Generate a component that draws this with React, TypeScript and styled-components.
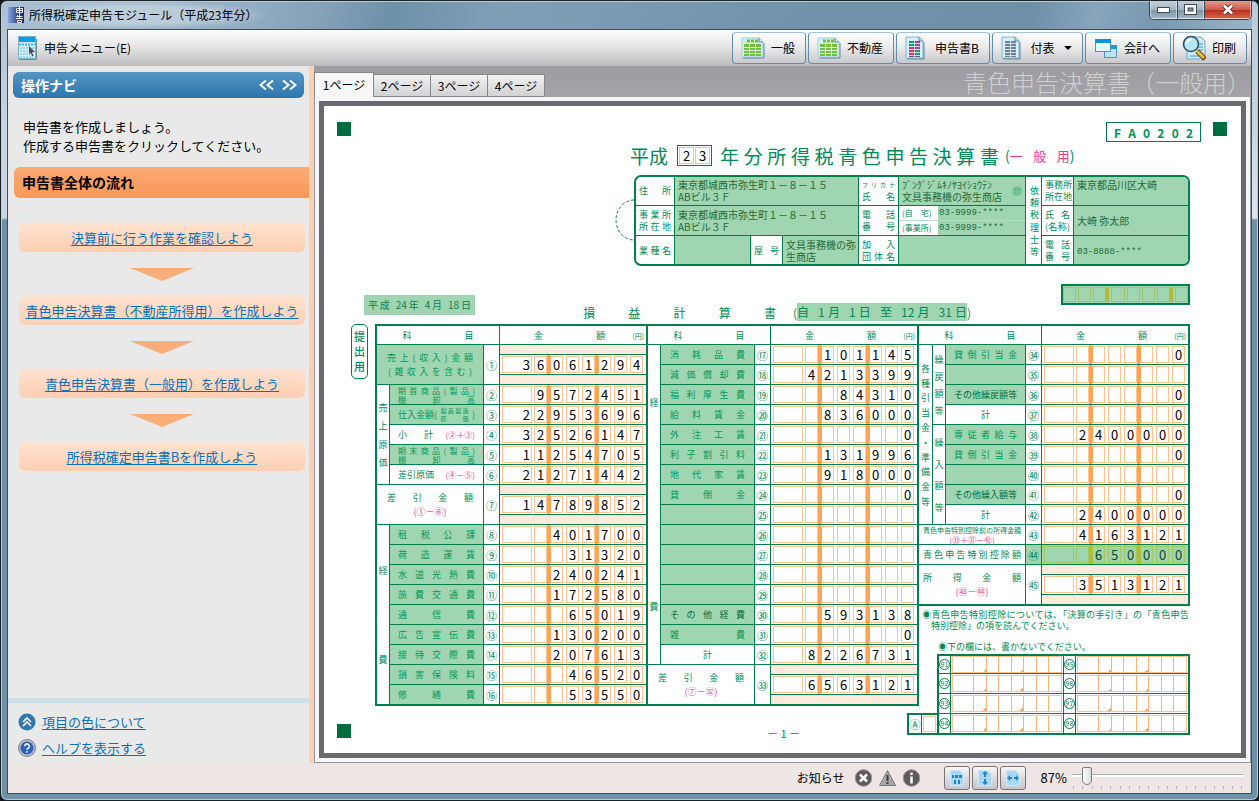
import React from "react";
import styled, { createGlobalStyle, css } from "styled-components";

const ink = "#008a57";
const line = "#007f4c";
const fill = "#9fd5b1";
const pink = "#ee3a93";
const jp = `"Noto Sans CJK JP", sans-serif`;

const GlobalStyle = createGlobalStyle`
  *, *::before, *::after { box-sizing: border-box; }
  body { margin: 0; background: #14181c; font: 12px/18px ${jp}; color: #000; }
  button { font: inherit; color: inherit; }
`;

/* ---------- window frame ---------- */

const Frame = styled.div`
  display: flex;
  flex-direction: column;
  min-height: 100vh;
  padding: 0 6px 6px;
  border: 1px solid #1b2228;
  border-radius: 7px;
  background:
    linear-gradient(180deg, #a9c0d2 0, #c9d6e2 130px, #c9d6e2 217px, transparent 219px) left / 6px 100% no-repeat,
    linear-gradient(180deg, #b8cbda 0, #c9d6e2 130px, #dbe5ee 217px, transparent 219px) right / 6px 100% no-repeat,
    linear-gradient(105deg, #a9c0d2 0, #93aec3 240px, #82a0b6 320px, #6c91a9 380px, #7f9fb5 480px, #7a9bb2 600px, #7194ab 740px, #6d90a8 1000px, #86a5bb 1060px, #7799b0 1120px, #9db6c9 100%) top / 100% 29px no-repeat,
    #6d92a8;
  box-shadow: inset 0 0 0 1px #b9ccd9;
`;

const TitleBar = styled.header`
  display: flex;
  justify-content: space-between;
  height: 28px;
`;

const AppTitle = styled.h1`
  display: flex;
  align-items: center;
  gap: 5px;
  margin: 0 0 0 1px;
  padding-right: 14px;
  font-size: 12px;
  font-weight: 400;
  background: radial-gradient(closest-side, rgba(255, 255, 255, 0.32) 60%, transparent);
`;

const Caption = styled.div`
  display: flex;
  height: 19px;
  border: 1px solid #38424c;
  border-top: 0;
  border-radius: 0 0 5px 5px;
  overflow: hidden;
`;

const CaptionButton = styled.button<{ $close?: boolean }>`
  display: grid;
  place-items: center;
  width: ${(p) => (p.$close ? 47 : 27)}px;
  padding: 0;
  border: 1px solid rgba(255, 255, 255, 0.5);
  border-top: 0;
  background: ${(p) =>
    p.$close
      ? "linear-gradient(#e39c90, #cf5a48 50%, #b92c1c 52%, #d8614a)"
      : "linear-gradient(#c3d0da, #a3b5c4 50%, #7c93a6 52%, #9fb3c3)"};
  & + & { border-left: 1px solid #38424c; }
`;

const Client = styled.div`
  display: flex;
  flex-direction: column;
  flex: 1;
  border: 1px solid #3f4d58;
  background: #e9e9e9;
`;

/* ---------- toolbar ---------- */

const Toolbar = styled.div`
  display: flex;
  align-items: center;
  justify-content: space-between;
  height: 36px;
  padding: 0 4px 0 10px;
  background: linear-gradient(#fdfdfd, #e6e6e6 45%, #bcbcbe);
`;

const MenuButton = styled.button`
  display: flex;
  align-items: center;
  gap: 7px;
  padding: 0;
  border: 0;
  background: none;
`;

const ToolGroup = styled.div`
  display: flex;
  gap: 2px;
`;

const ToolButton = styled.button<{ $w: number }>`
  display: flex;
  align-items: center;
  justify-content: space-between;
  width: ${(p) => p.$w}px;
  height: 32px;
  padding: 0 10px 0 8px;
  border: 1px solid #5f8db0;
  border-top-color: #a5c3d8;
  border-radius: 4px;
  background: linear-gradient(#fdfdfd, #ececed 45%, #c9c9cc);
  white-space: nowrap;
`;

/* ---------- navigation column ---------- */

const Work = styled.div`
  display: flex;
  flex: 1;
`;

const Side = styled.nav`
  display: flex;
  flex-direction: column;
  flex: 0 0 306px;
  border-right: 5px solid #fccfae;
  background: #e9e9e9;
`;

const NavHead = styled.div`
  display: flex;
  align-items: center;
  justify-content: space-between;
  height: 26px;
  margin: 6px 5px 0;
  padding: 0 7px 0 8px;
  border-radius: 6px;
  background: linear-gradient(#5394c3, #2c77ae);
  color: #fff;
  h2 { margin: 0; font-size: 14px; font-weight: 700; }
`;

const NavMove = styled.div`
  display: flex;
  gap: 8px;
  button { display: flex; padding: 0; border: 0; background: none; }
`;

const Lead = styled.p`
  margin: 19px 14px 12px 15px;
  font-size: 13px;
  line-height: 19px;
`;

const FlowHead = styled.h3`
  margin: 0 0 25px 6px;
  padding-left: 8px;
  border-radius: 6px 0 0 6px;
  background: linear-gradient(#fbaa76, #f99858);
  font-size: 14px;
  font-weight: 700;
  line-height: 31px;
`;

const Steps = styled.ol`
  display: flex;
  flex-direction: column;
  margin: 0 4px 0 11px;
  padding: 0;
  list-style: none;
`;

const Step = styled.li`
  display: flex;
  flex-direction: column;
  align-items: center;
  a {
    align-self: stretch;
    border-radius: 6px;
    background: linear-gradient(#ffe2d0, #fccfb2);
    text-align: center;
    line-height: 29px;
    white-space: nowrap;
  }
  svg { margin: 16px 0 15px; }
`;

const Link = styled.a`
  color: #0a72ba;
  font-size: 13px;
  text-underline-offset: 2px;
`;

const NavFoot = styled.div`
  display: flex;
  flex-direction: column;
  gap: 6px;
  margin-top: auto;
  padding: 9px 10px 5px;
  border-top: 5px solid #cbdfea;
`;

const FootLine = styled.div`
  display: flex;
  align-items: center;
  gap: 6px;
  height: 20px;
`;

/* ---------- document area ---------- */

const Main = styled.main`
  display: flex;
  flex-direction: column;
  flex: 1;
  min-width: 0;
`;

const TabStrip = styled.div`
  display: flex;
  align-items: flex-end;
  justify-content: space-between;
  height: 31px;
  background: linear-gradient(#9b9ba0, #a5a5a9);
`;

const Tabs = styled.div`
  display: flex;
  align-items: flex-end;
`;

const Tab = styled.button<{ $on?: boolean }>`
  width: ${(p) => (p.$on ? 60 : 57)}px;
  height: ${(p) => (p.$on ? 25 : 23)}px;
  padding: 0;
  border: 1px solid #85858c;
  border-bottom: ${(p) => (p.$on ? 0 : "1px solid #85858c")};
  border-left-width: ${(p) => (p.$on ? 1 : 0)}px;
  background: ${(p) => (p.$on ? "#f6f6f6" : "linear-gradient(#f2f2f2, #d2d2d4)")};
  line-height: 20px;
  font-size: 12px;
  white-space: nowrap;
`;

const DocTitle = styled.h2`
  margin: 0;
  color: #d0d0d2;
  font-size: 24px;
  font-weight: 300;
  line-height: 31px;
`;

const DocFrame = styled.div`
  display: flex;
  flex: 1;
  padding: 4px;
  border: 1px solid #8e96a2;
  border-top: 0;
  background: #f6f6f6;
`;

const Paper = styled.div`
  flex: 1;
  min-width: 0;
  border: 5px solid #6a6a6e;
  background: #fff;
`;

const Sheet = styled.article`
  width: 917px;
  margin: 0 auto;
  padding: 16px 0 0 13px;
  color: ${ink};
  font-size: 9px;
  line-height: 11px;
`;

const Mark = styled.i`
  display: block;
  width: 14px;
  height: 14px;
  background: #006d41;
`;

/* Spreads its characters over the full width, as printed forms do. */
const Spread = styled.span<{ $w?: number; $size?: number }>`
  display: block;
  width: ${(p) => (p.$w ? p.$w + "px" : "auto")};
  font-size: ${(p) => p.$size || 9}px;
  text-align: justify;
  text-align-last: justify;
  white-space: nowrap;
`;

const Formula = styled.span<{ $tight?: boolean }>`
  color: ${pink};
  font-size: ${(p) => (p.$tight ? 8 : 9)}px;
`;

const TopRow = styled.div`
  display: flex;
  height: 23px;
  padding-right: 14px;
`;

const Code = styled.div`
  display: flex;
  align-items: center;
  height: 20px;
  margin: 0 12px 0 auto;
  padding: 0 7px;
  border: 1px solid ${line};
  color: #00925c;
  font-weight: 700;
`;

const HeadBlock = styled.div`
  display: flex;
  flex-direction: column;
  width: 575px;
  margin: 0 51px 18px auto;
`;

const FormTitle = styled.div`
  display: flex;
  align-items: center;
  height: 21px;
  margin-bottom: 9px;
  padding-left: 15px;
  line-height: 21px;
`;

const Year = styled.span`
  display: flex;
  gap: 1px;
  margin: 0 8px 0 9px;
  padding: 1px;
  border: 1px solid ${line};
  b {
    width: 15px;
    border: 1px solid #fbc28c;
    color: #000;
    font-size: 13px;
    font-weight: 400;
    line-height: 15px;
    text-align: center;
  }
`;

const Kind = styled.span`
  display: flex;
  margin-left: 6px;
  font-size: 14px;
  em { color: ${pink}; font-style: normal; }
`;

const CardRow = styled.div`
  display: flex;
  > svg { flex: none; margin-top: 24px; }
`;

const Card = styled.div`
  flex: 1;
  height: 91px;
  border: 2px solid ${line};
  border-radius: 7px;
  overflow: hidden;
`;

const CardTable = styled.table`
  width: 100%;
  table-layout: fixed;
  border-collapse: separate;
  border-spacing: 0;
  th, td {
    height: 29px;
    padding: 0 3px;
    border-right: 1px solid ${line};
    border-bottom: 1px solid ${line};
    font-size: 9px;
    font-weight: 400;
    line-height: 12px;
    text-align: left;
  }
  tr > :last-child { border-right: 0; }
  tr:last-child > *, tr > .full { border-bottom: 0; }
  td { padding-right: 0; background: ${fill}; color: #1f6a3a; font-size: 10px; line-height: 12px; }
`;

const Phones = styled.td`
  && { padding: 0; }
  div { display: flex; align-items: center; height: 14px; font-size: 8px; line-height: 14px; }
  div + div { height: 15px; border-top: 1px solid #b9dfc4; }
  span { width: 39px; padding-left: 3px; background: #fff; color: ${ink}; white-space: nowrap; }
  b { padding-left: 1px; font: 9px/12px "Liberation Mono", monospace; }
`;

const Mono = styled.span`
  font: 9px/12px "Liberation Mono", monospace;
`;

const NameCell = styled.div`
  display: flex;
  align-items: center;
  justify-content: space-between;
  padding-right: 3px;
  white-space: nowrap;
  i { color: #00a060; font-style: normal; }
`;

const Vertical = styled.span<{ $h: number }>`
  display: block;
  height: ${(p) => p.$h}px;
  width: 11px;
  margin: 0 auto;
  writing-mode: vertical-rl;
  text-align-last: justify;
  text-align: justify;
  font-size: 9px;
  line-height: 11px;
`;

const SubRow = styled.div`
  display: flex;
  height: 40px;
  padding: 0 51px 0 27px;
`;

const Issued = styled.div`
  width: 111px;
  height: 20px;
  margin-top: 11px;
  padding: 0 4px;
  background: ${fill};
  color: #12804a;
  line-height: 20px;
`;

const Statement = styled.div`
  display: flex;
  align-items: center;
  height: 18px;
  margin: 19px auto 0 108px;
  font-size: 12px;
`;

const Period = styled.div`
  display: flex;
  align-items: center;
  margin-left: 17px;
  div { height: 18px; background: ${fill}; line-height: 18px; }
`;

const Office = styled.div`
  display: flex;
  width: 129px;
  height: 21px;
  padding: 1px 0;
  gap: 2px;
  border: 2px solid ${line};
  background: ${fill};
`;

const OfficeBox = styled.i<{ $bar?: boolean }>`
  flex: 1;
  border: 1px solid #a5c763;
  border-right: ${(p) => (p.$bar ? "4px solid #b0bb3a" : "1px solid #a5c763")};
`;

const FormBody = styled.div`
  display: flex;
  align-items: flex-start;
`;

const Gutter = styled.div`
  display: flex;
  flex-direction: column;
  justify-content: space-between;
  width: 38px;
  height: 414px;
`;

const Submit = styled.div`
  width: 17px;
  height: 55px;
  margin-left: 14px;
  padding: 4px 1px;
  border: 1px solid ${line};
  border-radius: 5px;
  font-size: 11px;
  font-weight: 500;
  line-height: 15px;
  text-align: center;
`;

const Section = styled.section<{ $first?: boolean }>`
  width: ${(p) => (p.$first ? 273 : 271)}px;
`;

const Ledger = styled.table<{ $first?: boolean }>`
  width: 100%;
  table-layout: fixed;
  border-collapse: separate;
  border-spacing: 0;
  border: 2px solid ${line};
  border-left-width: ${(p) => (p.$first ? 2 : 0)}px;
  border-bottom-width: 1px;
  tr { height: 20px; }
  thead tr { height: 19px; }
  th, td {
    padding: 0;
    border-right: 1px solid ${line};
    border-bottom: 1px solid ${line};
    font-weight: 400;
    text-align: center;
  }
  tr > .last { border-right: 0; }
`;

const HeadCell = styled.th`
  line-height: 11px;
`;

const HeadCenter = styled.div`
  display: flex;
  justify-content: center;
`;

const Money = styled.div`
  display: flex;
  align-items: flex-end;
  justify-content: space-between;
  padding: 0 2px 0 34px;
  small { font-size: 7px; line-height: 9px; }
`;

const Item = styled.th<{ $fill?: boolean; $pad?: number; $dark?: boolean }>`
  && { padding: 0 ${(p) => p.$pad || 9}px; }
  ${(p) => p.$fill && css`background: ${fill};`}
  color: ${(p) => (p.$dark ? "#00703f" : p.$fill ? "#00995a" : ink)};
  line-height: 9px;
`;

const No = styled.th<{ $fill?: boolean }>`
  font-size: 11px;
  line-height: 12px;
  ${(p) => p.$fill && css`background: ${fill};`}
`;

const Digits = styled.div<{ $fill?: boolean }>`
  display: flex;
  height: 19px;
  padding-left: 2px;
  background: ${(p) => (p.$fill ? fill : "#fff")};
  color: ${(p) => (p.$fill ? "#064a26" : "#000")};
`;

const Digit = styled.span<{ $wide?: boolean; $afterBar?: boolean; $fill?: boolean }>`
  width: ${(p) => (p.$wide ? 30 : 13)}px;
  margin: 1px 0;
  padding-right: ${(p) => (p.$wide ? 1 : 0)}px;
  border: 1px solid ${(p) => (p.$fill ? "#a5c763" : "#fbc390")};
  border-left-color: ${(p) => (p.$afterBar ? (p.$fill ? "#b0bb3a" : "#fba555") : p.$fill ? "#a5c763" : "#fbc390")};
  font-size: 13px;
  font-weight: 400;
  line-height: 15px;
  text-align: ${(p) => (p.$wide ? "right" : "center")};
`;

const Gap = styled.i<{ $bar?: boolean; $fill?: boolean; $first?: boolean }>`
  width: ${(p) => (p.$first ? 2 : 3)}px;
  background: ${(p) => (p.$bar ? (p.$fill ? "#b0bb3a" : "#fba555") : "none")};
`;

const Band = styled.div<{ $low?: boolean }>`
  height: 10px;
  background: #fdeadc;
  ${(p) => (p.$low ? css`border-top: 1px solid ${line};` : css`border-bottom: 1px solid ${line};`)}
`;

const Maker = styled.span`
  display: flex;
  align-items: center;
  justify-content: space-between;
  white-space: nowrap;
  small { display: block; width: 28px; font-size: 6px; line-height: 8px; }
`;

const Inline = styled.span`
  display: flex;
  align-items: center;
  justify-content: space-between;
  white-space: nowrap;
`;

const Result = styled.div`
  display: flex;
  flex-direction: column;
  align-items: center;
  gap: 5px;
`;

const PageNo = styled.p`
  margin: 19px 0 0;
  font-size: 11px;
  line-height: 16px;
  text-align: center;
`;

const Note = styled.div<{ $second?: boolean }>`
  margin: ${(p) => (p.$second ? "10px 0 2px 19px" : "3px 0 0 3px")};
  white-space: nowrap;
  p { margin: 0; padding-left: 9px; }
`;

const Reserved = styled.div`
  display: flex;
  align-items: flex-end;
  justify-content: flex-end;
`;

const Annex = styled.div`
  display: flex;
  flex: none;
  width: 30px;
  height: 22px;
  border: 2px solid ${line};
  border-right: 0;
  line-height: 18px;
  font-size: 11px;
  span { width: 13px; border-right: 1px solid ${line}; text-align: center; }
  i { flex: 1; margin: 1px; border: 1px solid #fbc390; }
`;

const ReservedTable = styled.table`
  flex: none;
  width: 253px;
  table-layout: fixed;
  border-collapse: separate;
  border-spacing: 0;
  border: 2px solid ${line};
  border-bottom-width: 1px;
  th, td { height: 20px; padding: 0; border-right: 1px solid ${line}; border-bottom: 1px solid ${line}; }
  tr:first-child > * { height: 18px; }
  tr > :last-child { border-right: 0; }
`;

const Ring = styled.span`
  display: block;
  width: 11px;
  height: 11px;
  border: 1px solid ${line};
  border-radius: 6px;
  font-size: 7px;
  font-weight: 400;
  line-height: 9px;
  text-align: center;
`;

const Slots = styled.div`
  display: flex;
  height: 17px;
  margin: 0 1px;
  border: 1px solid #fbc390;
`;

const Slot = styled.i<{ $wide?: boolean; $mark?: boolean }>`
  flex: ${(p) => (p.$wide ? "0 0 21px" : "1")};
  border-right: 1px solid #fbb273;
  ${(p) => p.$mark && css`background: linear-gradient(135deg, transparent 50%, #fba555 50%) right bottom / 3px 3px no-repeat;`}
  &:last-child { border-right: 0; }
`;

/* ---------- status bar ---------- */

const Status = styled.footer`
  display: flex;
  align-items: center;
  justify-content: flex-end;
  height: 30px;
  padding-right: 8px;
  background: #ede6e5;
`;

const Notices = styled.div`
  display: flex;
  align-items: center;
  gap: 5px;
  margin-right: 23px;
  span { margin-right: 4px; }
`;

const FitGroup = styled.div`
  display: flex;
  gap: 2px;
  margin-right: 15px;
`;

const FitButton = styled.button`
  display: grid;
  place-items: center;
  width: 26px;
  height: 24px;
  padding: 0;
  border: 1px solid #76767a;
  border-radius: 3px;
  background: linear-gradient(#f6f6f6, #dcdcde 50%, #c6c6ca);
`;

const Zoom = styled.label`
  display: flex;
  align-items: center;
  gap: 5px;
  font-size: 13px;
`;

const Scale = styled.span`
  display: flex;
  flex-direction: column;
  gap: 1px;
  width: 171px;
  svg { display: block; width: 100%; }
`;

const Range = styled.input`
  appearance: none;
  width: 100%;
  height: 18px;
  margin: 0;
  background: linear-gradient(#b0adb0, #b0adb0) 0 7px / 100% 1px no-repeat, linear-gradient(#fff, #fff) 0 8px / 100% 2px no-repeat;
  &::-webkit-slider-thumb {
    appearance: none;
    width: 10px;
    height: 18px;
    border: 1px solid #77777c;
    border-radius: 2px 2px 5px 5px;
    background: linear-gradient(90deg, #fff, #dcdcde);
  }
`;

/* ---------- drawings ---------- */

const AppIcon = () => (
  <svg width="16" height="16" viewBox="0 0 16 16">
    <defs><linearGradient id="ai"><stop offset="0" stopColor="#8ea6dd" /><stop offset=".6" stopColor="#2c4a9c" /><stop offset="1" stopColor="#122a72" /></linearGradient></defs>
    <rect width="16" height="16" fill="url(#ai)" />
    <path d="M8.500 1.500h6v4h-6zM8.500 3.500h6M11.500 0v8M9.500 8v2M8.500 9.500h6M11.500 8v4M8 11.500h7M9.500 13.500h4v2h-4z" fill="none" stroke="#fff" strokeWidth=".9" />
  </svg>
);

const MenuIcon = () => (
  <svg width="19" height="24" viewBox="0 0 19 24">
    <rect x=".5" y=".5" width="17" height="22" fill="#d6effb" stroke="#7cb4d0" />
    <rect x="1" y="1" width="16" height="5" fill="#0a9de0" />
    <path d="M1 8.500h16" stroke="#3db4ea" strokeWidth="2" strokeDasharray="2 1" />
    <path d="M2 12h15M2 15h10M2 18h10M2 21h13" stroke="#5cbbe6" strokeDasharray="2 1" />
    <path d="M11 10l6 6-3 .2 1.600 3.500-1.500.6-1.500-3.500-1.600 1.700z" fill="#4b4b50" />
    <path d="M1 23.500h17.500V3" fill="none" stroke="#6c8ca0" />
  </svg>
);

const SheetIcon = () => (
  <svg width="24" height="22" viewBox="0 0 24 22">
    <path d="M1 1h17l4 4v15H1z" fill="#d3ecf8" stroke="#a5cfe4" />
    <path d="M18 1v4h4M23 6v15H2" fill="none" stroke="#64879c" />
    <path d="M6 2.500h11v3H6zM3 7h17v12H3z" fill="#6cc23e" />
    <path d="M3 10.500h17M3 13.500h17M3 16.500h17M8.500 7v12M14.500 7v12M9.500 2v4M13.500 2v4" stroke="#e4f6da" />
  </svg>
);

const PageIcon = ({ color }: { color?: boolean }) => (
  <svg width="20" height="24" viewBox="0 0 20 24">
    <path d="M1 1h13l4 4v17H1z" fill="#d9effa" stroke="#7fb4d0" />
    <path d="M14 1v4h4M19 6v17H2" fill="none" stroke="#5f8299" />
    <path d="M4 5h11v16H4z" fill={color ? "#5a5a90" : "#6e8390"} />
    {color && <><path d="M6.500 6v6" stroke="#1fae6a" strokeWidth="3" /><path d="M6.500 12v8" stroke="#d8366c" strokeWidth="3" /><path d="M12.500 6v7" stroke="#a948b0" strokeWidth="3" /><path d="M12.500 13v7" stroke="#2e9a6a" strokeWidth="3" /></>}
    <path d="M4 7.500h11M4 10.500h11M4 13.500h11M4 16.500h11M4 19.500h11M9.500 5v16" stroke="#e6f4fb" strokeWidth=".8" />
  </svg>
);

const WindowsIcon = () => (
  <svg width="24" height="21" viewBox="0 0 24 21">
    <rect x="10.500" y="7.500" width="12" height="12" fill="#bfe2f4" stroke="#4f93b8" />
    <rect x="10" y="7" width="13" height="4" fill="#1d9bdc" />
    <rect x="1.500" y="1.500" width="15" height="12" fill="#e6f5fc" stroke="#4f93b8" />
    <rect x="1" y="1" width="16" height="4" fill="#0f94da" />
  </svg>
);

const PrintIcon = () => (
  <svg width="24" height="26" viewBox="0 0 24 26">
    <path d="M8 2h11l4 4v18H5V2z" fill="#cfe9f6" stroke="#6fa4c2" />
    <path d="M15 9h6M15 12h6M15 15h6M8 21h9" stroke="#3b9ac8" />
    <path d="M15 16l8 8" stroke="#5b4a1c" strokeWidth="5" />
    <path d="M15 16l7 7" stroke="#f5b52a" strokeWidth="3" />
    <circle cx="9" cy="9" r="7.500" fill="#b7e6f7" stroke="#2b5268" strokeWidth="1.600" />
    <path d="M4.500 8.500a5 5 0 0 1 5-4" fill="none" stroke="#fff" strokeWidth="1.800" />
  </svg>
);

const Chevrons = ({ flip }: { flip?: boolean }) => (
  <svg width="15" height="12" viewBox="0 0 15 12">
    <path d={flip ? "M1 1.500l5.500 4.500-5.500 4.500M8 1.500l5.500 4.500-5.500 4.500" : "M7 1.500l-5.500 4.500 5.500 4.500M14 1.500l-5.500 4.500 5.500 4.500"} fill="none" stroke="#fff" strokeWidth="2" />
  </svg>
);

const RoundUp = () => (
  <svg width="18" height="18" viewBox="0 0 18 18">
    <circle cx="9" cy="9" r="8.500" fill="#2f78ad" />
    <path d="M5 9l4-4 4 4M5 13l4-4 4 4" fill="none" stroke="#fff" strokeWidth="1.600" />
  </svg>
);

const Help = () => (
  <svg width="18" height="18" viewBox="0 0 18 18">
    <circle cx="9" cy="9" r="8.500" fill="#b9bcc2" stroke="#808288" />
    <circle cx="9" cy="9" r="6.500" fill="#2a62bd" />
    <path d="M6.700 7.300a2.300 2.300 0 1 1 3.300 2c-.8.4-1 .7-1 1.500" fill="none" stroke="#fff" strokeWidth="1.500" />
    <circle cx="9" cy="12.800" r=".9" fill="#fff" />
  </svg>
);

const NoticeIcon = ({ kind }: { kind: "x" | "warn" | "info" }) => (
  <svg width="19" height="18" viewBox="0 0 19 18">
    {kind === "warn" ? (
      <><path d="M9.500 1.500l8 15h-16z" fill="#a9a7a8" stroke="#77757a" /><path d="M9.500 6v6M9.500 13v2" stroke="#3c3a3e" strokeWidth="2" /></>
    ) : (
      <><circle cx="9.500" cy="9" r="8.300" fill="#5b5a5d" stroke="#9b999b" />
        {kind === "x" ? <path d="M6 5.500l7 7M13 5.500l-7 7" stroke="#fff" strokeWidth="2.500" /> : <path d="M9.500 3.500v2.500M9.500 7.500v7" stroke="#fff" strokeWidth="2.500" />}</>
    )}
  </svg>
);

const FitIcon = ({ d }: { d: string }) => (
  <svg width="14" height="16" viewBox="0 0 14 16">
    <path d="M.5.5h9l4 4v11H.5z" fill="#a9d6f2" stroke="#cfe8f7" />
    <path d={d} fill="#2185cc" />
  </svg>
);

/* ---------- form pieces ---------- */

type RowKind = "fill" | "plain" | "dark";
interface Row { label?: React.ReactNode; kind?: RowKind; no: string; value: string }

const Boxes = ({ value, tint }: { value: string; tint?: boolean }) => {
  const cells = value.padStart(8, " ").split("");
  return (
    <Digits $fill={tint}>
      {cells.map((c, i) => (
        <React.Fragment key={i}>
          <Digit $wide={i === 0} $afterBar={i === 2 || i === 5} $fill={tint}>{c}</Digit>
          {i < 7 && <Gap $first={i === 0} $bar={i === 1 || i === 4} $fill={tint} />}
        </React.Fragment>
      ))}
    </Digits>
  );
};

const Tall = ({ value }: { value: string }) => (
  <td className="last" rowSpan={2}>
    <Band />
    <Boxes value={value} />
    <Band $low />
  </td>
);

const Cells = ({ row, pad }: { row: Row; pad: number }) => (
  <>
    <Item $fill={row.kind !== "plain"} $dark={row.kind === "dark"} $pad={pad}>
      {typeof row.label === "string" && row.label.length > 1 ? <Spread>{row.label}</Spread> : row.label}
    </Item>
    <No>{row.no}</No>
    <td className="last"><Boxes value={row.value} /></td>
  </>
);

const Stock = ({ name }: { name: string }) => (
  <><Spread $size={8}>{name}</Spread><Spread $size={8}>棚 卸 高</Spread></>
);

const cost: Row[] = [
  { label: <Stock name="期首商品(製品)" />, no: "②", value: "9572451" },
  { label: <Maker>仕入金額(<small><Spread $size={6}>製品製造</Spread><Spread $size={6}>原 価</Spread></small>)</Maker>, no: "③", value: "22953696" },
  { label: <Inline><Spread $w={35}>小 計</Spread><Formula $tight>(②＋③)</Formula></Inline>, kind: "plain", no: "④", value: "32526147" },
  { label: <Stock name="期末商品(製品)" />, no: "⑤", value: "11254705" },
  { label: <Inline>差引原価<Formula $tight>(④－⑤)</Formula></Inline>, kind: "plain", no: "⑥", value: "21271442" },
];

const expenseA: Row[] = [
  { label: "租税公課", no: "⑧", value: "401700" },
  { label: "荷造運賃", no: "⑨", value: "31320" },
  { label: "水道光熱費", no: "⑩", value: "240241" },
  { label: "旅費交通費", no: "⑪", value: "172580" },
  { label: "通信費", no: "⑫", value: "65019" },
  { label: "広告宣伝費", no: "⑬", value: "130200" },
  { label: "接待交際費", no: "⑭", value: "207613" },
  { label: "損害保険料", no: "⑮", value: "46520" },
  { label: "修繕費", no: "⑯", value: "53550" },
];

const expenseB: Row[] = [
  { label: "消耗品費", no: "⑰", value: "101145" },
  { label: "減価償却費", no: "⑱", value: "4213399" },
  { label: "福利厚生費", no: "⑲", value: "84310" },
  { label: "給料賃金", no: "⑳", value: "836000" },
  { label: "外注工賃", no: "㉑", value: "0" },
  { label: "利子割引料", no: "㉒", value: "131996" },
  { label: "地代家賃", no: "㉓", value: "918000" },
  { label: "貸倒金", no: "㉔", value: "0" },
  { no: "㉕", value: "" },
  { no: "㉖", value: "" },
  { no: "㉗", value: "" },
  { no: "㉘", value: "" },
  { no: "㉙", value: "" },
  { label: "その他経費", kind: "dark", no: "㉚", value: "593138" },
  { label: "雑費", no: "㉛", value: "0" },
  { label: "計", kind: "plain", no: "㉜", value: "8226731" },
];

const reserves: Row[] = [
  { label: "貸倒引当金", no: "㉞", value: "0" },
  { no: "㉟", value: "" },
  { label: "その他繰戻額等", kind: "dark", no: "㊱", value: "0" },
  { label: "計", kind: "plain", no: "㊲", value: "0" },
  { label: "専従者給与", no: "㊳", value: "2400000" },
  { label: "貸倒引当金", no: "㊴", value: "0" },
  { no: "㊵", value: "" },
  { label: "その他繰入額等", kind: "dark", no: "㊶", value: "0" },
  { label: "計", kind: "plain", no: "㊷", value: "2400000" },
];

const Cols = ({ w }: { w: number[] }) => (
  <colgroup>{w.map((x, i) => <col key={i} width={x} />)}</colgroup>
);

const LedgerHead = ({ span }: { span: number }) => (
  <thead>
    <tr>
      <HeadCell colSpan={span}><HeadCenter><Spread $w={71}>科 目</Spread></HeadCenter></HeadCell>
      <HeadCell className="last"><Money><Spread $w={71}>金 額</Spread><small>(円)</small></Money></HeadCell>
    </tr>
  </thead>
);

const FirstLedger = () => (
  <Ledger $first>
    <Cols w={[13, 94, 16, 146]} />
    <LedgerHead span={3} />
    <tbody>
      <tr>
        <Item colSpan={2} rowSpan={2} $fill $pad={11}>
          <Result><Spread $w={86}>売上(収入)金額</Spread><Spread $w={84}>(雑収入を含む)</Spread></Result>
        </Item>
        <No rowSpan={2}>①</No>
        <Tall value="36061294" />
      </tr>
      <tr />
      {cost.map((r, i) => (
        <tr key={r.no}>
          {i === 0 && <th rowSpan={5}><Vertical $h={64}>売上原価</Vertical></th>}
          <Cells row={r} pad={8} />
        </tr>
      ))}
      <tr>
        <Item colSpan={2} rowSpan={2} $pad={10}>
          <Result><Spread $w={86}>差引金額</Spread><Formula>(①－⑥)</Formula></Result>
        </Item>
        <No rowSpan={2}>⑦</No>
        <Tall value="14789852" />
      </tr>
      <tr />
      {expenseA.map((r, i) => (
        <tr key={r.no}>
          {i === 0 && <th rowSpan={9}><Vertical $h={98}>経費</Vertical></th>}
          <Cells row={r} pad={8} />
        </tr>
      ))}
    </tbody>
  </Ledger>
);

const SecondLedger = () => (
  <Ledger>
    <Cols w={[13, 94, 16, 146]} />
    <LedgerHead span={3} />
    <tbody>
      {expenseB.map((r, i) => (
        <tr key={r.no}>
          {i === 0 && <th rowSpan={16}><Vertical $h={213}>経費</Vertical></th>}
          <Cells row={r} pad={9} />
        </tr>
      ))}
      <tr>
        <Item colSpan={2} rowSpan={2} $pad={10}>
          <Result><Spread $w={86}>差引金額</Spread><Formula>(⑦－㉜)</Formula></Result>
        </Item>
        <No rowSpan={2}>㉝</No>
        <Tall value="6563121" />
      </tr>
      <tr />
    </tbody>
  </Ledger>
);

const ThirdLedger = () => (
  <Ledger>
    <Cols w={[14, 13, 80, 16, 146]} />
    <LedgerHead span={4} />
    <tbody>
      {reserves.map((r, i) => (
        <tr key={r.no}>
          {i === 0 && <th rowSpan={9}><Vertical $h={142}>各種引当金・準備金等</Vertical></th>}
          {i === 0 && <th rowSpan={4}><Vertical $h={60}>繰戻額等</Vertical></th>}
          {i === 4 && <th rowSpan={5}><Vertical $h={74}>繰入額等</Vertical></th>}
          <Cells row={r} pad={8} />
        </tr>
      ))}
      <tr>
        <Item colSpan={3} $pad={4}>
          <Spread $size={7}>青色申告特別控除前の所得金額</Spread>
          <Formula $tight>(㉝＋㊲－㊷)</Formula>
        </Item>
        <No>㊸</No>
        <td className="last"><Boxes value="4163121" /></td>
      </tr>
      <tr>
        <Item colSpan={3} $pad={4}><Spread>青色申告特別控除額</Spread></Item>
        <No $fill>㊹</No>
        <td className="last"><Boxes value="650000" tint /></td>
      </tr>
      <tr>
        <Item colSpan={3} rowSpan={2} $pad={4}>
          <Result><Spread $w={98}>所得金額</Spread><Formula>(㊸－㊹)</Formula></Result>
        </Item>
        <No rowSpan={2}>㊺</No>
        <Tall value="3513121" />
      </tr>
      <tr />
    </tbody>
  </Ledger>
);

const SlotRow = () => (
  <Slots>
    {[0, 1, 2, 3, 4, 5, 6, 7].map((i) => <Slot key={i} $wide={i === 0} $mark={i === 1 || i === 4} />)}
  </Slots>
);

const HeaderCard = () => (
  <Card>
    <CardTable>
      <Cols w={[39, 76, 32, 76, 40, 39, 88, 16, 32, 114]} />
      <tbody>
        <tr>
          <th><Spread>住 所</Spread></th>
          <td colSpan={3}>東京都城西市弥生町１－８－１５<br />ABビル３Ｆ</td>
          <th><Spread $size={6}>フリガナ</Spread><Spread>氏 名</Spread></th>
          <td colSpan={2}>
            <NameCell><span>ﾌﾞﾝｸﾞｼﾞﾑｷﾉﾔﾖｲｼｮｳﾃﾝ<br />文具事務機の弥生商店</span><i>㊞</i></NameCell>
          </td>
          <th rowSpan={3} className="full"><Vertical $h={70}>依頼税理士等</Vertical></th>
          <th><Spread>事務所</Spread><Spread>所在地</Spread></th>
          <td>東京都品川区大崎<br />&nbsp;</td>
        </tr>
        <tr>
          <th><Spread>事業所</Spread><Spread>所在地</Spread></th>
          <td colSpan={3}>東京都城西市弥生町１－８－１５<br />ABビル３Ｆ</td>
          <th><Spread>電 話</Spread><Spread>番 号</Spread></th>
          <Phones colSpan={2}>
            <div><span>(自　宅)</span><b>03-9999-****</b></div>
            <div><span>(事業所)</span><b>03-9999-****</b></div>
          </Phones>
          <th><Spread>氏 名</Spread><Spread>(名称)</Spread></th>
          <td>大崎 弥太郎</td>
        </tr>
        <tr>
          <th><Spread>業種名</Spread></th>
          <td />
          <th><Spread>屋 号</Spread></th>
          <td>文具事務機の弥生商店</td>
          <th><Spread>加 入</Spread><Spread>団体名</Spread></th>
          <td colSpan={2} />
          <th><Spread>電 話</Spread><Spread>番 号</Spread></th>
          <td><Mono>03-8888-****</Mono></td>
        </tr>
      </tbody>
    </CardTable>
  </Card>
);

const steps = [
  "決算前に行う作業を確認しよう",
  "青色申告決算書（不動産所得用）を作成しよう",
  "青色申告決算書（一般用）を作成しよう",
  "所得税確定申告書Bを作成しよう",
];

export default function App() {
  return (
    <>
      <GlobalStyle />
      <Frame>
        <TitleBar>
          <AppTitle><AppIcon />所得税確定申告モジュール（平成23年分）</AppTitle>
          <Caption>
            <CaptionButton aria-label="最小化"><svg width="13" height="6"><rect x=".5" y=".5" width="12" height="5" fill="#fff" stroke="#444c55" /></svg></CaptionButton>
            <CaptionButton aria-label="最大化"><svg width="13" height="11"><rect x=".5" y=".5" width="12" height="10" fill="#fff" stroke="#444c55" /><rect x="4" y="4" width="5" height="3" fill="#8299ab" stroke="#444c55" /></svg></CaptionButton>
            <CaptionButton $close aria-label="閉じる"><svg width="14" height="11" viewBox="0 0 14 11"><path d="M3 1.500l8 8M11 1.500l-8 8" stroke="#4c3238" strokeWidth="4.500" /><path d="M3 1.500l8 8M11 1.500l-8 8" stroke="#fff" strokeWidth="2.500" /></svg></CaptionButton>
          </Caption>
        </TitleBar>
        <Client>
          <Toolbar>
            <MenuButton><MenuIcon />申告メニュー(E)</MenuButton>
            <ToolGroup>
              <ToolButton $w={74}><SheetIcon />一般</ToolButton>
              <ToolButton $w={86}><SheetIcon />不動産</ToolButton>
              <ToolButton $w={94}><PageIcon color />申告書B</ToolButton>
              <ToolButton $w={91}><PageIcon />付表<svg width="8" height="4"><path d="M0 0h8l-4 4z" /></svg></ToolButton>
              <ToolButton $w={86}><WindowsIcon />会計へ</ToolButton>
              <ToolButton $w={74}><PrintIcon />印刷</ToolButton>
            </ToolGroup>
          </Toolbar>
          <Work>
            <Side>
              <NavHead>
                <h2>操作ナビ</h2>
                <NavMove>
                  <button aria-label="前へ"><Chevrons /></button>
                  <button aria-label="次へ"><Chevrons flip /></button>
                </NavMove>
              </NavHead>
              <Lead>申告書を作成しましょう。<br />作成する申告書をクリックしてください。</Lead>
              <FlowHead>申告書全体の流れ</FlowHead>
              <Steps>
                {steps.map((s, i) => (
                  <Step key={s}>
                    <Link href="#">{s}</Link>
                    {i < 3 && <svg width="64" height="13"><path d="M0 0h64l-32 13z" fill="#f9ad79" /></svg>}
                  </Step>
                ))}
              </Steps>
              <NavFoot>
                <FootLine><RoundUp /><Link href="#">項目の色について</Link></FootLine>
                <FootLine><Help /><Link href="#">ヘルプを表示する</Link></FootLine>
              </NavFoot>
            </Side>
            <Main>
              <TabStrip>
                <Tabs>
                  <Tab $on>1ページ</Tab>
                  <Tab>2ページ</Tab>
                  <Tab>3ページ</Tab>
                  <Tab>4ページ</Tab>
                </Tabs>
                <DocTitle>青色申告決算書（一般用）</DocTitle>
              </TabStrip>
              <DocFrame>
                <Paper>
                  <Sheet>
                    <TopRow>
                      <Mark />
                      <Code><Spread $w={79} $size={12}>F A 0 2 0 2</Spread></Code>
                      <Mark />
                    </TopRow>
                    <HeadBlock>
                      <FormTitle>
                        <Spread $w={38} $size={19}>平成</Spread>
                        <Year><b>2</b><b>3</b></Year>
                        <Spread $w={279} $size={19}>年分所得税青色申告決算書</Spread>
                        <Kind>(<em><Spread $w={60} $size={13}>一般用</Spread></em>)</Kind>
                      </FormTitle>
                      <CardRow>
                        <svg width="19" height="42"><path d="M19 1A18 20 0 0 0 19 41" fill="none" stroke={line} strokeDasharray="3 2" /></svg>
                        <HeaderCard />
                      </CardRow>
                    </HeadBlock>
                    <SubRow>
                      <Issued><Spread $size={10}>平成 24年 4月 18日</Spread></Issued>
                      <Statement>
                        <Spread $w={193} $size={12}>損益計算書</Spread>
                        <Period>(<div><Spread $w={170} $size={12}>自 1月 1日 至 12月 31日</Spread></div>)</Period>
                      </Statement>
                      <Office>
                        {[0, 1, 2, 3, 4, 5, 6, 7].map((i) => <OfficeBox key={i} $bar={i === 2 || i === 6} />)}
                      </Office>
                    </SubRow>
                    <FormBody>
                      <Gutter><Submit>提出用</Submit><Mark /></Gutter>
                      <Section $first><FirstLedger /></Section>
                      <Section>
                        <SecondLedger />
                        <PageNo>－ 1 －</PageNo>
                      </Section>
                      <Section>
                        <ThirdLedger />
                        <Note>
                          <Spread $w={267}>◉青色申告特別控除については、「決算の手引き」の「青色申告</Spread>
                          <p>特別控除」の項を読んでください。</p>
                        </Note>
                        <Note $second>◉下の欄には、書かないでください。</Note>
                        <Reserved>
                          <Annex><span>Ⓐ</span><i /></Annex>
                          <ReservedTable>
                            <Cols w={[12, 113, 12, 112]} />
                            <tbody>
                              {[91, 92, 93, 94].map((n) => (
                                <tr key={n}>
                                  <th><Ring>{n}</Ring></th>
                                  <td><SlotRow /></td>
                                  <th><Ring>{n + 4}</Ring></th>
                                  <td><SlotRow /></td>
                                </tr>
                              ))}
                            </tbody>
                          </ReservedTable>
                        </Reserved>
                      </Section>
                    </FormBody>
                  </Sheet>
                </Paper>
              </DocFrame>
            </Main>
          </Work>
          <Status>
            <Notices>
              <span>お知らせ</span>
              <NoticeIcon kind="x" /><NoticeIcon kind="warn" /><NoticeIcon kind="info" />
            </Notices>
            <FitGroup>
              <FitButton aria-label="100%"><FitIcon d="M2 5h2v3H2zM5 5h3v3H5zM9 5h3v3H9zM4 10h2v4H4zM8 10h2v4H8z" /></FitButton>
              <FitButton aria-label="高さに合わせる"><FitIcon d="M7 1l3 3H8v3H6V4H4zM7 15l3-3H8V9H6v3H4z" /></FitButton>
              <FitButton aria-label="幅に合わせる"><FitIcon d="M1 8l3-3v2h2v2H4v2zM13 8l-3-3v2H8v2h2v2z" /></FitButton>
            </FitGroup>
            <Zoom>
              87%
              <Scale>
                <Range type="range" min={0} max={100} defaultValue={6} />
                <svg height="4"><path d="M1.500 0v3M10.500 0v3M20.500 0v3M29.500 0v3M38.500 0v3M48.500 0v3M57.500 0v3M67.500 0v3M76.500 0v3M86.500 0v3M95.500 0v3M104.500 0v3M114.500 0v3M123.500 0v3M133.500 0v3M142.500 0v3M151.500 0v3M160.500 0v3M169.500 0v3" stroke="#b5b2b4" /></svg>
              </Scale>
            </Zoom>
          </Status>
        </Client>
      </Frame>
    </>
  );
}
